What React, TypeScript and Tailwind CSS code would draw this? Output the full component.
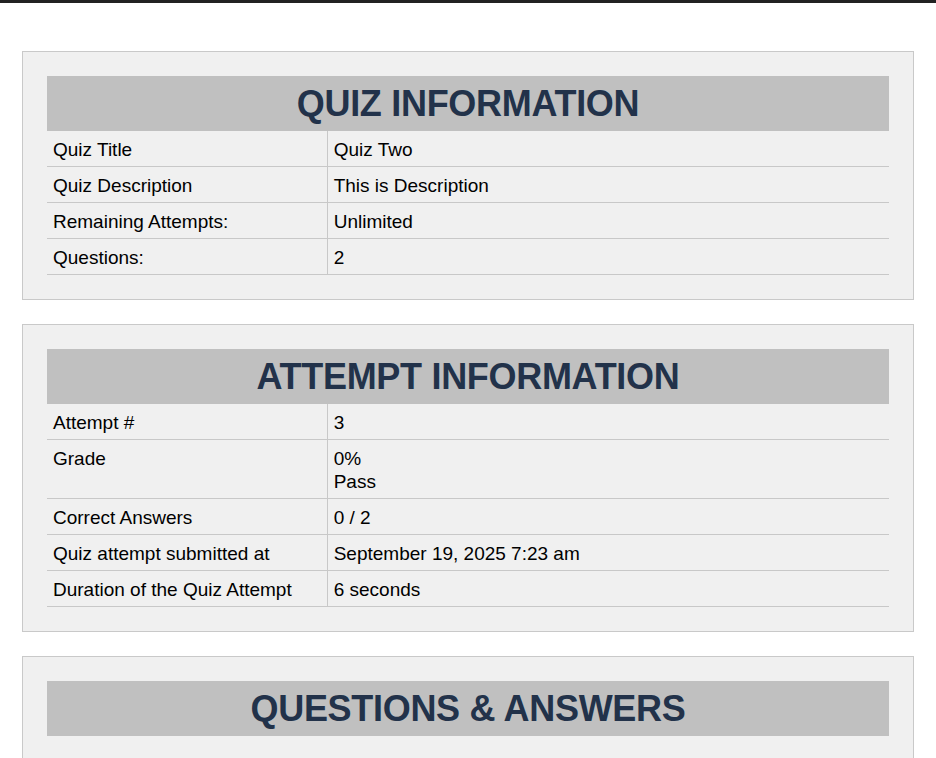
import React from 'react';

type Row = { label: string; value: React.ReactNode };

const quizRows: Row[] = [
  { label: 'Quiz Title', value: 'Quiz Two' },
  { label: 'Quiz Description', value: 'This is Description' },
  { label: 'Remaining Attempts:', value: 'Unlimited' },
  { label: 'Questions:', value: '2' },
];

const attemptRows: Row[] = [
  { label: 'Attempt #', value: '3' },
  {
    label: 'Grade',
    value: (
      <>
        0%
        <br />
        Pass
      </>
    ),
  },
  { label: 'Correct Answers', value: '0 / 2' },
  { label: 'Quiz attempt submitted at', value: 'September 19, 2025 7:23 am' },
  { label: 'Duration of the Quiz Attempt', value: '6 seconds' },
];

const Section: React.FC<{ title: string; rows?: Row[] }> = ({ title, rows }) => (
  <div className="border border-[#c9c9c9] bg-[#f0f0f0] p-6">
    <h2 className="h-[55px] bg-[#c0c0c0] flex items-center justify-center text-[36px] font-bold text-[#22324a] leading-none tracking-[-0.3px]">
      {title}
    </h2>
    {rows && (
      <div>
        {rows.map(row => (
          <div key={row.label} className="flex border-b border-[#c8c8c8] text-[19px] leading-[23px] text-black">
            <div className="w-1/3 shrink-0 px-[6px] pt-[7px] pb-[5px] border-r border-[#c8c8c8]">{row.label}</div>
            <div className="flex-1 px-[6px] pt-[7px] pb-[5px]">{row.value}</div>
          </div>
        ))}
      </div>
    )}
  </div>
);

export default function App() {
  return (
    <div className="min-h-screen bg-white font-['Liberation_Sans',Arial,sans-serif]">
      <div className="h-[3px] bg-[#222]" />
      <div className="px-[22px] pt-[48px] flex flex-col gap-6">
        <Section title="QUIZ INFORMATION" rows={quizRows} />
        <Section title="ATTEMPT INFORMATION" rows={attemptRows} />
        <Section title="QUESTIONS & ANSWERS" />
      </div>
    </div>
  );
}
